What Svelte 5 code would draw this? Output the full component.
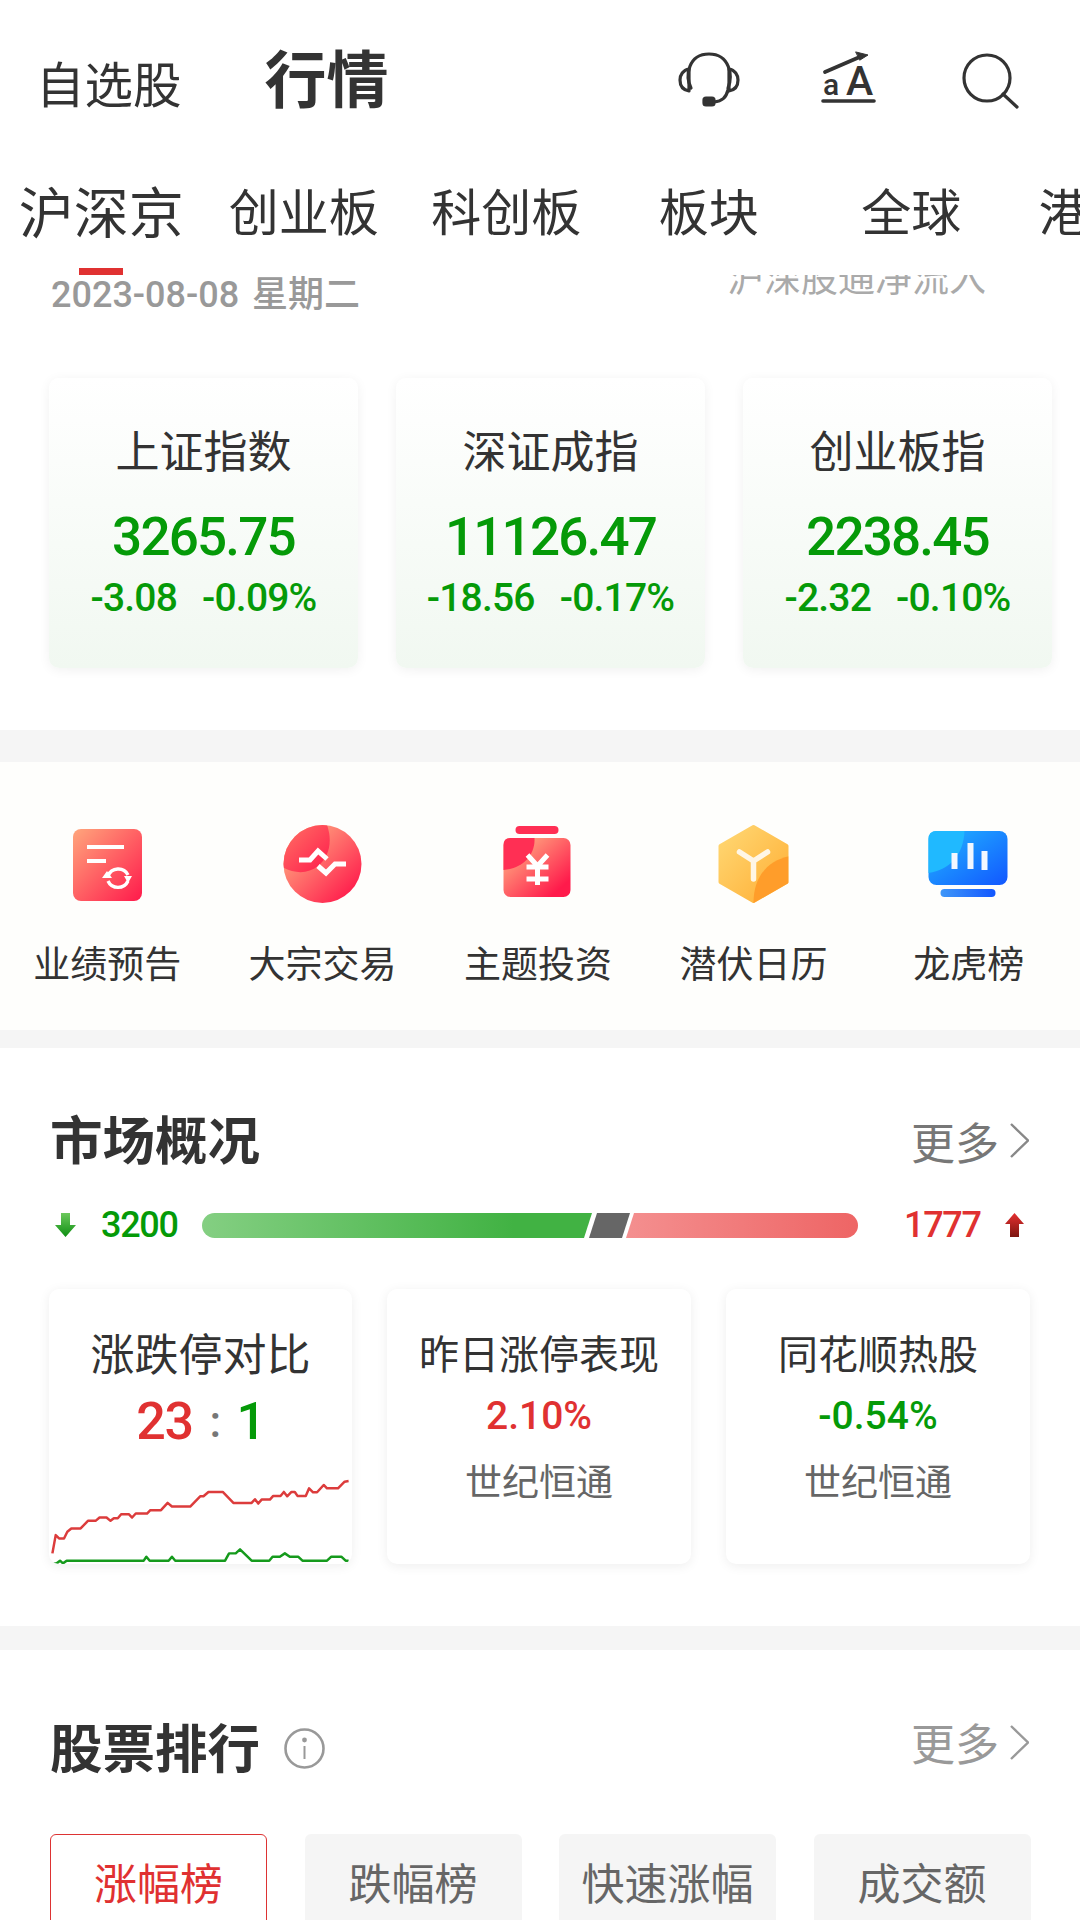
<script>
  const tabs = ['沪深京', '创业板', '科创板', '板块', '全球', '港股通'];
  const indexes = [
    { name: '上证指数', value: '3265.75', diff: '-3.08', pct: '-0.09%' },
    { name: '深证成指', value: '11126.47', diff: '-18.56', pct: '-0.17%' },
    { name: '创业板指', value: '2238.45', diff: '-2.32', pct: '-0.10%' }
  ];
  const hot = [
    { title: '昨日涨停表现', pct: '2.10%', up: true, name: '世纪恒通' },
    { title: '同花顺热股', pct: '-0.54%', up: false, name: '世纪恒通' }
  ];
  const ranks = ['涨幅榜', '跌幅榜', '快速涨幅', '成交额'];

  // traced from the limit-up / limit-down lines
  const redLine = '65,820 75,765 85,775 100,775 110,755 122,745 150,745 172,722 195,722 207,712 228,712 240,722 250,714 262,714 272,702 295,702 305,712 316,700 350,700 360,690 392,690 412,668 425,679 480,679 510,648 520,648 535,635 578,635 610,668 665,668 675,657 685,670 695,658 720,658 730,647 752,647 762,635 772,648 785,635 795,635 803,647 828,647 838,624 850,636 862,636 882,614 892,624 925,624 945,604 957,602';
  const greenLine = '65,852 78,850 88,842 97,850 108,842 340,842 348,830 358,842 415,842 425,830 435,842 585,842 597,820 617,820 630,808 665,842 718,842 728,830 750,830 765,820 780,830 805,830 818,842 892,842 905,830 935,830 948,842 957,842';
</script>

<main>
  <header>
    <div class="title-group">
      <span class="watch">自选股</span>
      <span class="market">行情</span>
    </div>
    <svg class="head-icons" width="360" height="80" viewBox="670 40 360 80" fill="none" stroke="#333" stroke-width="3.2" stroke-linecap="round" stroke-linejoin="round">
      <path d="M691 88 C685 76 688 54 709 54 C730 54 733 76 728 88" />
      <path d="M689 69 C683 70 680 75 680 80 C680 86 683 90 689 91 Z" />
      <path d="M729 69 C735 70 738 75 738 80 C738 86 735 90 729 91 Z" />
      <path d="M728 90 C726 98 722 101 714 102" />
      <rect x="704" y="98" width="10" height="7" rx="2" fill="#333" />
      <path d="M825 72 L862 56" stroke-width="3.8" />
      <path d="M856 52 L868 55 L860 60 Z" fill="#333" stroke-width="1" />
      <text x="823" y="95" class="glyph-a" fill="#333" stroke="none">a</text>
      <text x="846" y="95" class="glyph-b" fill="#333" stroke="none">A</text>
      <path d="M823 101 L874 101" stroke-width="3.6" />
      <circle cx="987" cy="78" r="23" />
      <path d="M1003 94 L1017 107" />
    </svg>
  </header>

  <nav class="tabs">
    {#each tabs as t, i}
      <div class="tab" class:active={i === 0}>{t}</div>
    {/each}
  </nav>

  <section class="overview">
    <div class="date-row">
      <span class="date">2023-08-08 星期二</span>
      <span class="flow">沪深股通净流入</span>
    </div>
    <div class="index-grid">
      {#each indexes as idx}
        <div class="index-card">
          <div class="index-name">{idx.name}</div>
          <div class="index-value">{idx.value}</div>
          <div class="index-diff"><span>{idx.diff}</span><span>{idx.pct}</span></div>
        </div>
      {/each}
    </div>
  </section>

  <div class="band"></div>

  <section class="shortcuts">
    <div class="shortcut">
      <svg width="90" height="90" viewBox="62.5 820 90 90">
        <defs>
          <linearGradient id="warm" x1="0" y1="0" x2="1" y2="1">
            <stop offset="0" stop-color="#ffa67c" />
            <stop offset="1" stop-color="#ff1a4b" />
          </linearGradient>
        </defs>
        <rect x="73" y="829" width="69" height="72" rx="8" fill="url(#warm)" />
        <g fill="none" stroke="#fff" stroke-width="4">
          <path d="M87 847 H124 M87 861 H106" />
          <path d="M108 876 A11 11 0 0 1 128 875" stroke-width="3.4" />
          <path d="M128 881 A11 11 0 0 1 108 881" stroke-width="3.4" />
        </g>
        <path d="M102 878 L107 871 L112 878 Z M124 876 L132 876 L128 883 Z" fill="#fff" />
      </svg>
      <span>业绩预告</span>
    </div>
    <div class="shortcut">
      <svg width="90" height="90" viewBox="277.5 820 90 90">
        <defs>
          <linearGradient id="warm2" x1="0" y1="0" x2="1" y2="1">
            <stop offset="0.1" stop-color="#ffb083" />
            <stop offset="0.9" stop-color="#ff1a4b" />
          </linearGradient>
          <linearGradient id="petal2" x1="0" y1="0" x2="1" y2="1">
            <stop offset="0" stop-color="#ff7c68" />
            <stop offset="1" stop-color="#ff1a4b" />
          </linearGradient>
          <clipPath id="disc"><circle cx="322.5" cy="864" r="39" /></clipPath>
        </defs>
        <circle cx="322.5" cy="864" r="39" fill="url(#warm2)" />
        <path clip-path="url(#disc)" d="M326 822 C333 840 330 856 318 866 C308 874 295 874 282 867 L278 820 Z" fill="url(#petal2)" />
        <g fill="none" stroke="#fff" stroke-width="5">
          <path d="M299 860 H310 L318 851 L327 859" />
          <path d="M318 866 L326 873 L335 864 H346" />
        </g>
      </svg>
      <span>大宗交易</span>
    </div>
    <div class="shortcut">
      <svg width="90" height="90" viewBox="493 820 90 90">
        <defs>
          <linearGradient id="warm3" x1="0" y1="0" x2="1" y2="1">
            <stop offset="0.1" stop-color="#ffb083" />
            <stop offset="0.85" stop-color="#ff1a4b" />
          </linearGradient>
        </defs>
        <rect x="516" y="826" width="43" height="8" rx="4" fill="#ff2f54" />
        <rect x="504" y="838" width="67" height="59" rx="7" fill="url(#warm3)" />
        <path d="M535 838 C536 856 522 869 504 870 V845 Q504 838 511 838 Z" fill="#ff2f54" />
        <path d="M528 855 L538 866 L548 855 M527 867 H549 M527 879 H549 M538 866 V885" fill="none" stroke="#fff" stroke-width="5" />
      </svg>
      <span>主题投资</span>
    </div>
    <div class="shortcut">
      <svg width="90" height="90" viewBox="708 820 90 90">
        <defs>
          <linearGradient id="gold" x1="0" y1="0" x2="1" y2="1">
            <stop offset="0" stop-color="#ffd874" />
            <stop offset="1" stop-color="#ffae34" />
          </linearGradient>
          <clipPath id="hex"><path d="M753 825 L788 845 V883 L753 903 L718 883 V845 Z" /></clipPath>
        </defs>
        <path d="M753 827 L786 846 V882 L753 901 L720 882 V846 Z" fill="url(#gold)" stroke="url(#gold)" stroke-width="4" stroke-linejoin="round" />
        <path clip-path="url(#hex)" d="M790 856 C768 860 753 876 753 903 L790 903 Z" fill="#ff9d2a" />
        <path d="M739 852 L753 861 L767 852 M753 861 V879" fill="none" stroke="#fff6e6" stroke-width="5.5" stroke-linecap="round" stroke-linejoin="round" />
      </svg>
      <span>潜伏日历</span>
    </div>
    <div class="shortcut">
      <svg width="90" height="90" viewBox="924 820 90 90">
        <defs>
          <linearGradient id="blue" x1="0" y1="0" x2="1" y2="1">
            <stop offset="0" stop-color="#22b8ff" />
            <stop offset="1" stop-color="#1257ff" />
          </linearGradient>
          <linearGradient id="blueBase" x1="0" y1="0" x2="1" y2="0">
            <stop offset="0" stop-color="#3f97f8" />
            <stop offset="1" stop-color="#1257ff" />
          </linearGradient>
        </defs>
        <rect x="929" y="831" width="79" height="54" rx="8" fill="url(#blue)" />
        <path d="M965 831 C964 855 950 870 929 873 V839 Q929 831 937 831 Z" fill="#20b9ff" />
        <g fill="#f2f7ff">
          <rect x="952" y="853" width="6" height="16" />
          <rect x="968" y="843" width="6" height="26" />
          <rect x="982" y="851" width="6" height="19" />
        </g>
        <rect x="941" y="889" width="55" height="8" rx="4" fill="url(#blueBase)" />
      </svg>
      <span>龙虎榜</span>
    </div>
  </section>

  <div class="band thin"></div>

  <section class="summary">
    <div class="section-head">
      <h2>市场概况</h2>
      <div class="more">
        <span>更多</span>
        <svg width="19" height="35" viewBox="0 0 19 35" fill="none" stroke="#888" stroke-width="2.4"><path d="M1 1 L18 17.5 L1 34" /></svg>
      </div>
    </div>

    <div class="breadth">
      <svg width="21" height="24" viewBox="0 0 21 24">
        <defs>
          <linearGradient id="downArrow" x1="0" y1="0" x2="0" y2="1">
            <stop offset="0" stop-color="#6cc85c" />
            <stop offset="1" stop-color="#0e8f12" />
          </linearGradient>
        </defs>
        <path d="M6 0 H15 V12 H21 L10.5 24 L0 12 H6 Z" fill="url(#downArrow)" />
      </svg>
      <span class="fall-count">3200</span>
      <svg width="656" height="25" viewBox="202 1212 656 25">
        <defs>
          <linearGradient id="barGreen" x1="0" y1="0" x2="1" y2="0">
            <stop offset="0" stop-color="#84cf82" />
            <stop offset="0.8" stop-color="#41b243" />
          </linearGradient>
          <linearGradient id="barRed" x1="0" y1="0" x2="1" y2="0">
            <stop offset="0" stop-color="#f48f8f" />
            <stop offset="1" stop-color="#ee6565" />
          </linearGradient>
        </defs>
        <path d="M214.5 1212 H592 L584 1237 H214.5 A12.5 12.5 0 0 1 214.5 1212 Z" fill="url(#barGreen)" />
        <path d="M597 1212 H630 L622 1237 H589 Z" fill="#666" />
        <path d="M634 1212 H845.5 A12.5 12.5 0 0 1 845.5 1237 H626 Z" fill="url(#barRed)" />
      </svg>
      <span class="rise-count">1777</span>
      <svg width="19" height="24" viewBox="0 0 19 24">
        <defs>
          <linearGradient id="upArrow" x1="0" y1="0" x2="0" y2="1">
            <stop offset="0" stop-color="#e53030" />
            <stop offset="1" stop-color="#7c1510" />
          </linearGradient>
        </defs>
        <path d="M9.5 0 L19 11 H14 V24 H5 V11 H0 Z" fill="url(#upArrow)" />
      </svg>
    </div>

    <div class="summary-grid">
      <div class="summary-card">
        <div class="summary-title first">涨跌停对比</div>
        <div class="limit-ratio"><span class="rise">23</span><span class="sep">:</span><span class="fall">1</span></div>
        <svg class="spark" width="303" height="88" viewBox="57 590 908 265" fill="none" stroke-width="7.5" stroke-linejoin="round">
          <polyline points={redLine} stroke="#dc3c3c" />
          <polyline points={greenLine} stroke="#159a1c" />
        </svg>
      </div>
      {#each hot as h}
        <div class="summary-card">
          <div class="summary-title">{h.title}</div>
          <div class="summary-pct" class:rise={h.up} class:fall={!h.up}>{h.pct}</div>
          <div class="summary-name">{h.name}</div>
        </div>
      {/each}
    </div>
  </section>

  <div class="band mid"></div>

  <section class="ranking">
    <div class="section-head">
      <div class="rank-title">
        <h2>股票排行</h2>
        <svg width="41" height="41" viewBox="0 0 41 41" fill="none" stroke="#999" stroke-width="2.6">
          <circle cx="20.5" cy="20.5" r="19" />
          <path d="M20.5 18 V31" stroke-width="2" />
          <circle cx="20.5" cy="12" r="2.4" fill="#999" stroke="none" />
        </svg>
      </div>
      <div class="more light">
        <span>更多</span>
        <svg width="19" height="35" viewBox="0 0 19 35" fill="none" stroke="#999" stroke-width="2.4"><path d="M1 1 L18 17.5 L1 34" /></svg>
      </div>
    </div>
    <div class="rank-tabs">
      {#each ranks as r, i}
        <div class="rank-tab" class:selected={i === 0}>{r}</div>
      {/each}
    </div>
  </section>
</main>

<style>
  :global(body) {
    margin: 0;
    background: #fff;
  }

  main {
    width: 1080px;
    height: 1920px;
    overflow: hidden;
    background: #fff;
    color: #333;
    font-family: Roboto, "Noto Sans CJK SC", sans-serif;
  }

  header {
    height: 160px;
    display: flex;
    justify-content: space-between;
    box-sizing: border-box;
    padding: 40px 50px 0 36px;
  }

  .title-group {
    display: flex;
    align-items: flex-start;
    gap: 83px;
    height: 84px;
  }

  .watch {
    font-size: 48.5px;
    line-height: 84px;
    margin-top: 5px;
  }

  .market {
    font-size: 62px;
    font-weight: 700;
    line-height: 84px;
  }

  .head-icons {
    display: block;
  }

  .glyph-a {
    font: 500 30px Roboto, sans-serif;
  }

  .glyph-b {
    font: 500 41px Roboto, sans-serif;
  }

  .tabs {
    height: 115px;
    display: grid;
    grid-auto-flow: column;
    grid-auto-columns: 202.5px;
    overflow: hidden;
    position: relative;
  }

  .tab {
    position: relative;
    box-sizing: border-box;
    padding-bottom: 18px;
    display: flex;
    align-items: center;
    justify-content: center;
    font-size: 50px;
    white-space: nowrap;
  }

  .tab.active {
    font-size: 55px;
  }

  .tab.active::after {
    content: "";
    position: absolute;
    left: 79px;
    bottom: 0;
    width: 44px;
    height: 7px;
    background: #e03131;
  }

  .overview {
    height: 455px;
    overflow: hidden;
  }

  .date-row {
    height: 103px;
    display: flex;
    justify-content: space-between;
    align-items: flex-start;
    padding: 0 94px 0 51px;
    overflow: hidden;
  }

  .date {
    font-size: 36px;
    font-weight: 500;
    line-height: 40px;
    word-spacing: 4px;
    color: #999;
  }

  .flow {
    font-size: 37px;
    line-height: 40px;
    margin-top: -15px;
    color: #aaa;
  }

  .index-grid {
    display: grid;
    grid-template-columns: repeat(3, 309px);
    gap: 38px;
    padding-left: 49px;
  }

  .index-card {
    height: 290px;
    box-sizing: border-box;
    padding-top: 45px;
    border-radius: 10px;
    background: linear-gradient(#fff, #f1f8f1);
    box-shadow: 0 2px 12px rgba(0, 0, 0, 0.06);
    text-align: center;
  }

  .index-name {
    font-size: 44px;
    line-height: 60px;
    color: #333;
  }

  .index-value {
    margin-top: 24px;
    font-size: 53px;
    font-weight: 500;
    line-height: 60px;
    letter-spacing: -1.8px;
    color: #059a08;
  }

  .index-diff {
    margin-top: 9px;
    display: flex;
    justify-content: center;
    gap: 25px;
    font-size: 39px;
    font-weight: 500;
    line-height: 44px;
    letter-spacing: -0.8px;
    color: #059a08;
  }

  .band {
    height: 32px;
    background: #f5f5f5;
  }

  .band.thin {
    height: 18px;
  }

  .band.mid {
    height: 24px;
  }

  .shortcuts {
    height: 268px;
    box-sizing: border-box;
    padding: 58px 3px 0 0;
    display: grid;
    grid-template-columns: repeat(5, 1fr);
    background: #fefefc;
  }

  .shortcut {
    display: flex;
    flex-direction: column;
    align-items: center;
    gap: 31px;
    font-size: 37px;
    line-height: 50px;
    white-space: nowrap;
    transform: translateX(-0.5px);
  }

  .shortcut svg {
    display: block;
  }

  .summary {
    height: 578px;
    box-sizing: border-box;
    padding-top: 59px;
  }

  .section-head {
    display: flex;
    justify-content: space-between;
    align-items: center;
    padding: 0 51px 0 50px;
    height: 70px;
  }

  h2 {
    margin: 0;
    font-size: 52.5px;
    font-weight: 700;
    line-height: 70px;
  }

  .more {
    display: flex;
    align-items: center;
    gap: 11px;
    font-size: 44px;
    color: #777;
    margin-top: -3px;
  }

  .more svg {
    display: block;
  }

  .more.light {
    color: #999;
    margin-top: -16px;
  }

  .breadth {
    margin-top: 28px;
    height: 40px;
    padding-left: 55px;
    display: flex;
    align-items: center;
    font-size: 36px;
    font-weight: 500;
    letter-spacing: -1.3px;
  }

  .fall-count {
    margin: 0 25px;
    color: #059a08;
    width: 76px;
  }

  .rise-count {
    margin: 0 27px 0 46px;
    color: #e03131;
    width: 74px;
  }

  .summary-grid {
    margin-top: 44px;
    padding-left: 49px;
    display: grid;
    grid-template-columns: 303px 304px 304px;
    gap: 35px;
  }

  .summary-card {
    height: 275px;
    box-sizing: border-box;
    padding-top: 42px;
    border-radius: 10px;
    overflow: hidden;
    background: #fff;
    box-shadow: 0 2px 12px rgba(0, 0, 0, 0.07);
    text-align: center;
  }

  .summary-title {
    font-size: 40px;
    line-height: 50px;
  }

  .summary-title.first {
    font-size: 44px;
  }

  .limit-ratio {
    margin-top: 11px;
    display: flex;
    justify-content: center;
    gap: 17px;
    font-size: 52px;
    font-weight: 500;
    line-height: 60px;
    letter-spacing: -1.5px;
  }

  .sep {
    color: #777;
    font-size: 44px;
  }

  .rise {
    color: #e03131;
  }

  .fall {
    color: #059a08;
  }

  .spark {
    display: block;
    margin-top: 25px;
  }

  .summary-pct {
    margin-top: 10px;
    font-size: 39px;
    font-weight: 500;
    line-height: 50px;
  }

  .summary-name {
    margin-top: 18px;
    font-size: 37px;
    line-height: 50px;
    color: #666;
  }

  .ranking {
    padding-top: 65px;
  }

  .rank-title {
    display: flex;
    align-items: center;
    gap: 24px;
  }

  .rank-title svg {
    display: block;
    margin-top: -4px;
  }

  .rank-tabs {
    margin-top: 49px;
    padding-left: 50px;
    display: grid;
    grid-template-columns: repeat(4, 217px);
    gap: 37.5px;
  }

  .rank-tab {
    height: 120px;
    box-sizing: border-box;
    padding-bottom: 27px;
    display: flex;
    align-items: center;
    justify-content: center;
    border-radius: 6px;
    background: #f5f5f5;
    font-size: 43px;
    color: #666;
  }

  .rank-tab.selected {
    background: #fff;
    border: 1.5px solid #d33;
    color: #e03131;
  }
</style>
